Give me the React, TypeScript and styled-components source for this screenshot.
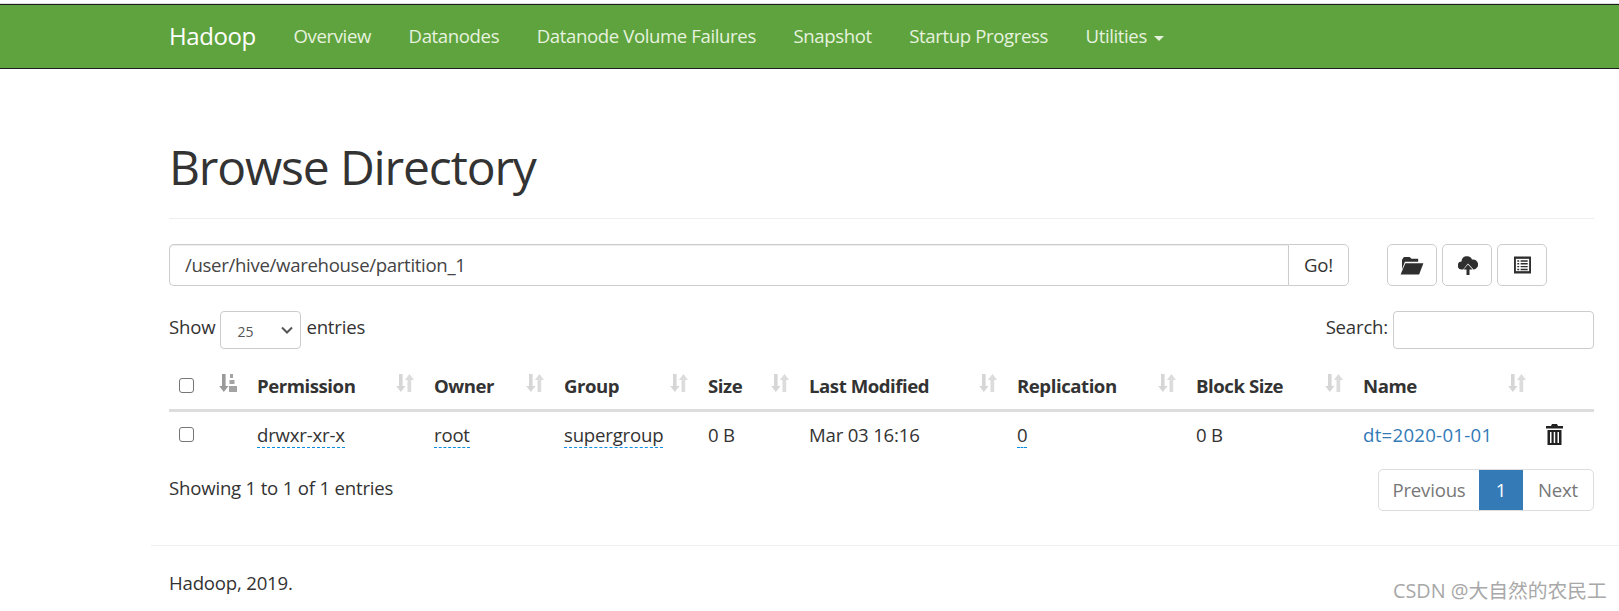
import React from 'react';
import styled, { createGlobalStyle } from 'styled-components';

const columns = [
  { name: 'Permission', width: 177 },
  { name: 'Owner', width: 130 },
  { name: 'Group', width: 144 },
  { name: 'Size', width: 101 },
  { name: 'Last Modified', width: 208 },
  { name: 'Replication', width: 179 },
  { name: 'Block Size', width: 167 },
  { name: 'Name', width: 183 },
];

function SortIcon() {
  return (
    <SortSvg viewBox="0 0 18 18">
      <path d="M3 0h3.600v12H9.500L4.800 18 .2 12H3z" fill="#d6d6d6" />
      <path d="M11.500 18V6H8.800l4.700-6 4.500 6h-2.800v12z" fill="#dcdcdc" />
    </SortSvg>
  );
}

function App() {
  return (
    <>
      <GlobalStyle />
      <Navbar>
        <Brand>Hadoop</Brand>
        <NavLink>Overview</NavLink>
        <NavLink>Datanodes</NavLink>
        <NavLink>Datanode Volume Failures</NavLink>
        <NavLink>Snapshot</NavLink>
        <NavLink>Startup Progress</NavLink>
        <NavLink>
          Utilities <Caret />
        </NavLink>
      </Navbar>
      <Page>
        <Title>Browse Directory</Title>
        <Toolbar>
          <PathGroup>
            <PathInput readOnly value="/user/hive/warehouse/partition_1" />
            <GoButton>Go!</GoButton>
          </PathGroup>
          <IconButtons>
            <IconButton>
              <svg width="24" height="19" viewBox="0 0 25 20" fill="#2f2f2f">
                <path d="M4 1h6l2 2h7v3H5L2 14V4z" />
                <path d="M5.500 7.500H24.500L20 19.500H0.500z" />
              </svg>
            </IconButton>
            <IconButton>
              <CloudSvg width="20" height="20" viewBox="0 0 20 20" fill="#2f2f2f">
                <path d="M5 14.500H4a4 4 0 0 1-.5-8 5.500 5.500 0 0 1 10.500-2A5 5 0 0 1 16 14.500h-.500L10 8.500z" />
                <path d="M10 9.500l4.500 5H11.500V20h-3v-5.500H5.500z" />
              </CloudSvg>
            </IconButton>
            <IconButton>
              <svg width="17" height="18" viewBox="0 0 18 18">
                <rect x="0" y="0" width="18" height="18" fill="#2f2f2f" />
                <rect x="2" y="2.500" width="14" height="13" fill="#fff" />
                <path d="M3.500 4h2v1.500h-2zM7 4h7.500v1.500H7zM3.500 7h2v1.500h-2zM7 7h7.500v1.500H7zM3.500 10h2v1.500h-2zM7 10h7.500v1.500H7zM3.500 13h2v1.500h-2zM7 13h7.500v1.500H7z" fill="#2f2f2f" />
              </svg>
            </IconButton>
          </IconButtons>
        </Toolbar>
        <FilterRow>
          <ShowLabel>
            Show
            <SelectWrap>
              <EntrySelect defaultValue="25">
                <option>25</option>
              </EntrySelect>
              <Chevron viewBox="0 0 12 8">
                <path d="M1 1.500l5 5 5-5" fill="none" stroke="#555" strokeWidth="2" />
              </Chevron>
            </SelectWrap>
            entries
          </ShowLabel>
          <SearchLabel>
            Search:
            <SearchInput />
          </SearchLabel>
        </FilterRow>
        <Table>
          <colgroup>
            <col style={{ width: 77 }} />
            {columns.map((c) => (
              <col key={c.name} style={{ width: c.width }} />
            ))}
            <col />
          </colgroup>
          <thead>
            <tr>
              <HeadCell>
                <Check />
                <SortSvg viewBox="0 0 18 18">
                  <path d="M3 0h3.600v12H9.500L4.800 18 .2 12H3z" fill="#9a9a9a" />
                  <path d="M11 0h3v4h-3zM10.500 6h5v4h-5zM10 12h8v6h-8z" fill="#a3a3a3" />
                </SortSvg>
              </HeadCell>
              {columns.map((c) => (
                <HeadCell key={c.name}>
                  {c.name}
                  <SortIcon />
                </HeadCell>
              ))}
              <HeadCell />
            </tr>
          </thead>
          <tbody>
            <tr>
              <BodyCell>
                <Check />
              </BodyCell>
              <BodyCell>
                <Editable>drwxr-xr-x</Editable>
              </BodyCell>
              <BodyCell>
                <Editable>root</Editable>
              </BodyCell>
              <BodyCell>
                <Editable>supergroup</Editable>
              </BodyCell>
              <BodyCell>0 B</BodyCell>
              <BodyCell>Mar 03 16:16</BodyCell>
              <BodyCell>
                <Editable>0</Editable>
              </BodyCell>
              <BodyCell>0 B</BodyCell>
              <BodyCell>
                <FileLink>dt=2020-01-01</FileLink>
              </BodyCell>
              <BodyCell>
                <TrashSvg width="17" height="21" viewBox="0 0 17 21" fill="#222">
                  <path d="M6 0h5l1 2h5v2.500H0V2h5z" />
                  <path d="M1.500 6h14v15h-14zM4 8v11h1.500V8zM7.700 8v11h1.500V8zM11.500 8v11H13V8z" fillRule="evenodd" />
                </TrashSvg>
              </BodyCell>
            </tr>
          </tbody>
        </Table>
        <InfoRow>
          <Info>Showing 1 to 1 of 1 entries</Info>
          <Pagination>
            <PageItem $width={100}>Previous</PageItem>
            <PageItem $width={44} $active>
              1
            </PageItem>
            <PageItem $width={70}>Next</PageItem>
          </Pagination>
        </InfoRow>
      </Page>
      <Footer>Hadoop, 2019.</Footer>
      <Watermark>CSDN @大自然的农民工</Watermark>
    </>
  );
}

export default App;

const GlobalStyle = createGlobalStyle`
  html, body {
    margin: 0;
    background: #fff;
  }
  body {
    height: 611px;
    overflow: hidden;
    font-family: 'Open Sans', 'Noto Sans CJK SC', sans-serif;
    font-size: 18.6px;
    letter-spacing: -0.2px;
    color: #333;
  }
`;

const Navbar = styled.nav`
  margin-top: 4px;
  height: 65px;
  box-sizing: border-box;
  padding: 0 0 2px 169px;
  display: flex;
  align-items: center;
  gap: 37.6px;
  background: #5fa33e;
  border-top: 1px solid #1c1c1c;
  border-bottom: 1px solid #1c1c1c;
  box-shadow: 0 -1px 0 #ddd;
`;
const Brand = styled.div`
  font-size: 24px;
  letter-spacing: -0.4px;
  color: #fff;
`;
const NavLink = styled.div`
  font-size: 18.6px;
  letter-spacing: -0.39px;
  color: #e6f2df;
`;
const Caret = styled.span`
  display: inline-block;
  margin-left: 3px;
  vertical-align: middle;
  border-top: 5px solid #e6f2df;
  border-left: 5px solid transparent;
  border-right: 5px solid transparent;
`;
const Page = styled.main`
  padding: 0 25px 0 169px;
`;
const Title = styled.h1`
  margin: 0;
  height: 150px;
  box-sizing: border-box;
  padding-top: 69px;
  font-size: 48px;
  font-weight: 400;
  letter-spacing: -1.15px;
  line-height: 1.2;
  color: #333;
  border-bottom: 1px solid #eee;
`;
const Toolbar = styled.div`
  display: flex;
  margin-top: 25px;
`;
const PathGroup = styled.div`
  display: flex;
  width: 1180px;
  height: 42px;
`;
const PathInput = styled.input`
  flex: 1;
  min-width: 0;
  box-sizing: border-box;
  padding: 0 15px 2px;
  font: inherit;
  letter-spacing: -0.32px;
  color: #444;
  border: 1px solid #ccc;
  border-right: 0;
  border-radius: 5px 0 0 5px;
  box-shadow: inset 0 1px 1px rgba(0, 0, 0, 0.075);
  outline: none;
`;
const GoButton = styled.button`
  width: 61px;
  padding: 0 0 2px;
  font: inherit;
  letter-spacing: inherit;
  color: #333;
  background: #fff;
  border: 1px solid #ccc;
  border-radius: 0 5px 5px 0;
`;
const IconButtons = styled.div`
  display: flex;
  gap: 5px;
  margin-left: 38px;
`;
const IconButton = styled.button`
  width: 50px;
  height: 42px;
  padding: 0;
  display: flex;
  align-items: center;
  justify-content: center;
  background: #fff;
  border: 1px solid #ccc;
  border-radius: 5px;
`;
const CloudSvg = styled.svg`
  margin-left: 2px;
`;
const FilterRow = styled.div`
  display: flex;
  justify-content: space-between;
  align-items: center;
  margin-top: 25px;
`;
const ShowLabel = styled.label`
  display: flex;
  align-items: flex-start;
  gap: 5px;
  line-height: 31px;
`;
const SelectWrap = styled.span`
  position: relative;
  display: block;
  width: 81px;
  height: 38px;
`;
const EntrySelect = styled.select`
  appearance: none;
  display: block;
  width: 100%;
  height: 100%;
  box-sizing: border-box;
  padding: 3px 16px 0;
  font: inherit;
  font-size: 14px;
  color: #555;
  background: #fff;
  border: 1px solid #ccc;
  border-radius: 4px;
`;
const Chevron = styled.svg`
  position: absolute;
  right: 8px;
  top: 15px;
  width: 12px;
  height: 8px;
  pointer-events: none;
`;
const SearchLabel = styled.label`
  display: flex;
  align-items: flex-start;
  gap: 5px;
  line-height: 31px;
`;
const SearchInput = styled.input`
  width: 201px;
  height: 38px;
  box-sizing: border-box;
  border: 1px solid #ccc;
  border-radius: 4px;
`;
const Table = styled.table`
  width: 100%;
  margin-top: 9px;
  table-layout: fixed;
  border-collapse: collapse;
`;
const HeadCell = styled.th`
  position: relative;
  height: 52px;
  box-sizing: border-box;
  padding: 4px 11px 0;
  text-align: left;
  font-weight: 700;
  letter-spacing: -0.45px;
  white-space: nowrap;
  border-bottom: 3px solid #ddd;
`;
const BodyCell = styled.td`
  height: 46px;
  padding: 0 11px;
  white-space: nowrap;
`;
const Check = styled.span`
  display: block;
  width: 13px;
  height: 13px;
  margin-left: -1px;
  border: 1px solid #767676;
  border-radius: 3px;
`;
const SortSvg = styled.svg`
  position: absolute;
  right: 9px;
  top: 16px;
  width: 18px;
  height: 18px;
`;
const TrashSvg = styled.svg`
  display: block;
`;
const Editable = styled.span`
  border-bottom: 1px dashed #0a8fe0;
`;
const FileLink = styled.span`
  letter-spacing: 0.28px;
  color: #337ab7;
`;
const InfoRow = styled.div`
  display: flex;
  justify-content: space-between;
  align-items: flex-start;
  margin-top: 11px;
`;
const Info = styled.div`
  margin-top: 6px;
`;
const Pagination = styled.div`
  display: flex;
  height: 42px;
  border: 1px solid #ddd;
  border-radius: 5px;
  box-sizing: border-box;
`;
const PageItem = styled.div<{ $active?: boolean; $width: number }>`
  display: flex;
  align-items: center;
  justify-content: center;
  width: ${(p) => p.$width}px;
  color: ${(p) => (p.$active ? '#fff' : '#777')};
  background: ${(p) => (p.$active ? '#337ab7' : 'transparent')};
`;
const Footer = styled.footer`
  margin: 34px 0 0 151px;
  padding: 24px 0 0 18px;
  border-top: 1px solid #eee;
`;
const Watermark = styled.div`
  position: absolute;
  left: 1393px;
  top: 575px;
  font-size: 19.8px;
  letter-spacing: 0;
  color: #a8a8a8;
`;
